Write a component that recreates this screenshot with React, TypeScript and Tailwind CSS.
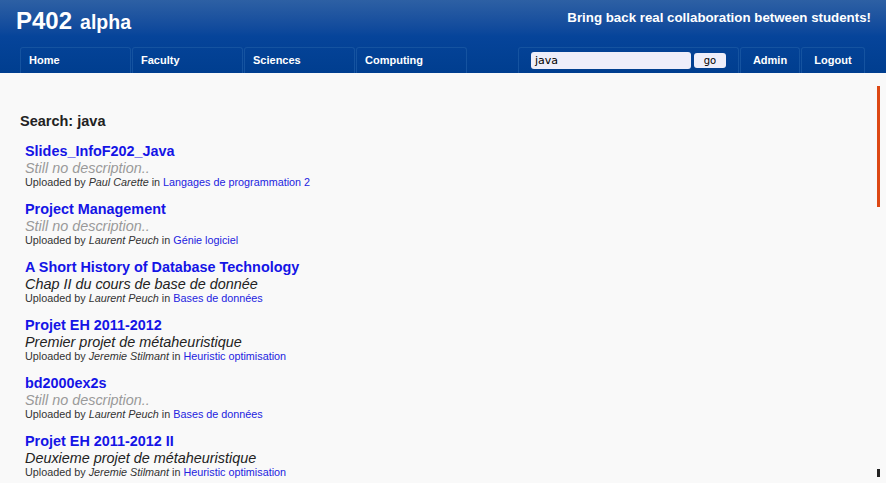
import React from 'react';

type Doc = {
  title: string;
  desc: string | null;
  author: string;
  course: string;
};

const DOCS: Doc[] = [
  { title: 'Slides_InfoF202_Java', desc: null, author: 'Paul Carette', course: 'Langages de programmation 2' },
  { title: 'Project Management', desc: null, author: 'Laurent Peuch', course: 'Génie logiciel' },
  { title: 'A Short History of Database Technology', desc: 'Chap II du cours de base de donnée', author: 'Laurent Peuch', course: 'Bases de données' },
  { title: 'Projet EH 2011-2012', desc: 'Premier projet de métaheuristique', author: 'Jeremie Stilmant', course: 'Heuristic optimisation' },
  { title: 'bd2000ex2s', desc: null, author: 'Laurent Peuch', course: 'Bases de données' },
  { title: 'Projet EH 2011-2012 II', desc: 'Deuxieme projet de métaheuristique', author: 'Jeremie Stilmant', course: 'Heuristic optimisation' },
];

const Tab: React.FC<{ label: string; w: string }> = ({ label, w }) => (
  <div className={`${w} h-[26px] border border-b-0 border-[#1553a0] rounded-t-[3px] pl-[8px] text-[11px] font-bold text-white leading-[25px]`}>
    {label}
  </div>
);

const App: React.FC = () => {
  return (
    <div className="relative w-[886px] h-[483px] overflow-hidden bg-[#f9f9f9] font-['Liberation_Sans',Arial,sans-serif]">
      <header className="h-[73px] bg-linear-to-b from-[#2d60a4] via-[#06449a] to-[#003e8f]">
        <div className="flex items-start justify-between h-[47px] pl-[16px] pr-[15px]">
          <div className="flex items-baseline gap-[8px] pt-[7px] text-white font-bold">
            <span className="text-[24px] leading-[28px]">P402</span>
            <span className="text-[19.5px] leading-[28px]">alpha</span>
          </div>
          <div className="pt-[10px] text-[13.3px] font-bold text-white leading-[16px]">
            Bring back real collaboration between students!
          </div>
        </div>
        <nav className="flex pl-[20px] gap-[1px]">
          <Tab label="Home" w="w-[111px]" />
          <Tab label="Faculty" w="w-[111px]" />
          <Tab label="Sciences" w="w-[111px]" />
          <Tab label="Computing" w="w-[111px]" />
          <div className="ml-[50px] w-[221px] h-[26px] border border-b-0 border-[#1553a0] rounded-t-[3px] flex items-center pl-[12px] gap-[3px]">
            <div className="w-[160px] h-[17px] bg-[#eeeefa] rounded-[3px] pl-[4px] font-['DejaVu_Sans',sans-serif] text-[11px] leading-[17px] text-black">
              java
            </div>
            <div className="w-[32px] h-[15px] bg-[#eeeefa] rounded-[3px] text-center font-['DejaVu_Sans',sans-serif] text-[10px] leading-[15px] text-black">
              go
            </div>
          </div>
          <div className="w-[60px] h-[26px] border border-b-0 border-[#1553a0] rounded-t-[3px] text-center text-[11px] font-bold text-white leading-[25px]">
            Admin
          </div>
          <div className="w-[64px] h-[26px] border border-b-0 border-[#1553a0] rounded-t-[3px] text-center text-[11px] font-bold text-white leading-[25px]">
            Logout
          </div>
        </nav>
      </header>

      <main className="pl-[20px] pt-[40px]">
        <h2 className="text-[14.5px] font-bold text-[#222] leading-[17px] mb-[13px]">Search: java</h2>
        <ul className="pl-[5px] flex flex-col gap-[13px]">
          {DOCS.map((d, i) => (
            <li key={i}>
              <div className="text-[14.4px] font-bold text-[#1414e6] leading-[17px]">{d.title}</div>
              {d.desc ? (
                <div className="text-[14.4px] italic text-[#222] leading-[16px]">{d.desc}</div>
              ) : (
                <div className="text-[14.4px] italic text-[#999] leading-[16px]">Still no description..</div>
              )}
              <div className="text-[10.8px] text-[#333] leading-[12px]">
                Uploaded by <i>{d.author}</i> in <span className="text-[#2323e0]">{d.course}</span>
              </div>
            </li>
          ))}
        </ul>
      </main>

      <div className="absolute left-[877px] top-[86px] w-[3px] h-[121px] bg-[#dd4814]" />
      <div className="absolute left-[877px] top-[469px] w-[3px] h-[8px] bg-[#222]" />
    </div>
  );
};

export default App;
